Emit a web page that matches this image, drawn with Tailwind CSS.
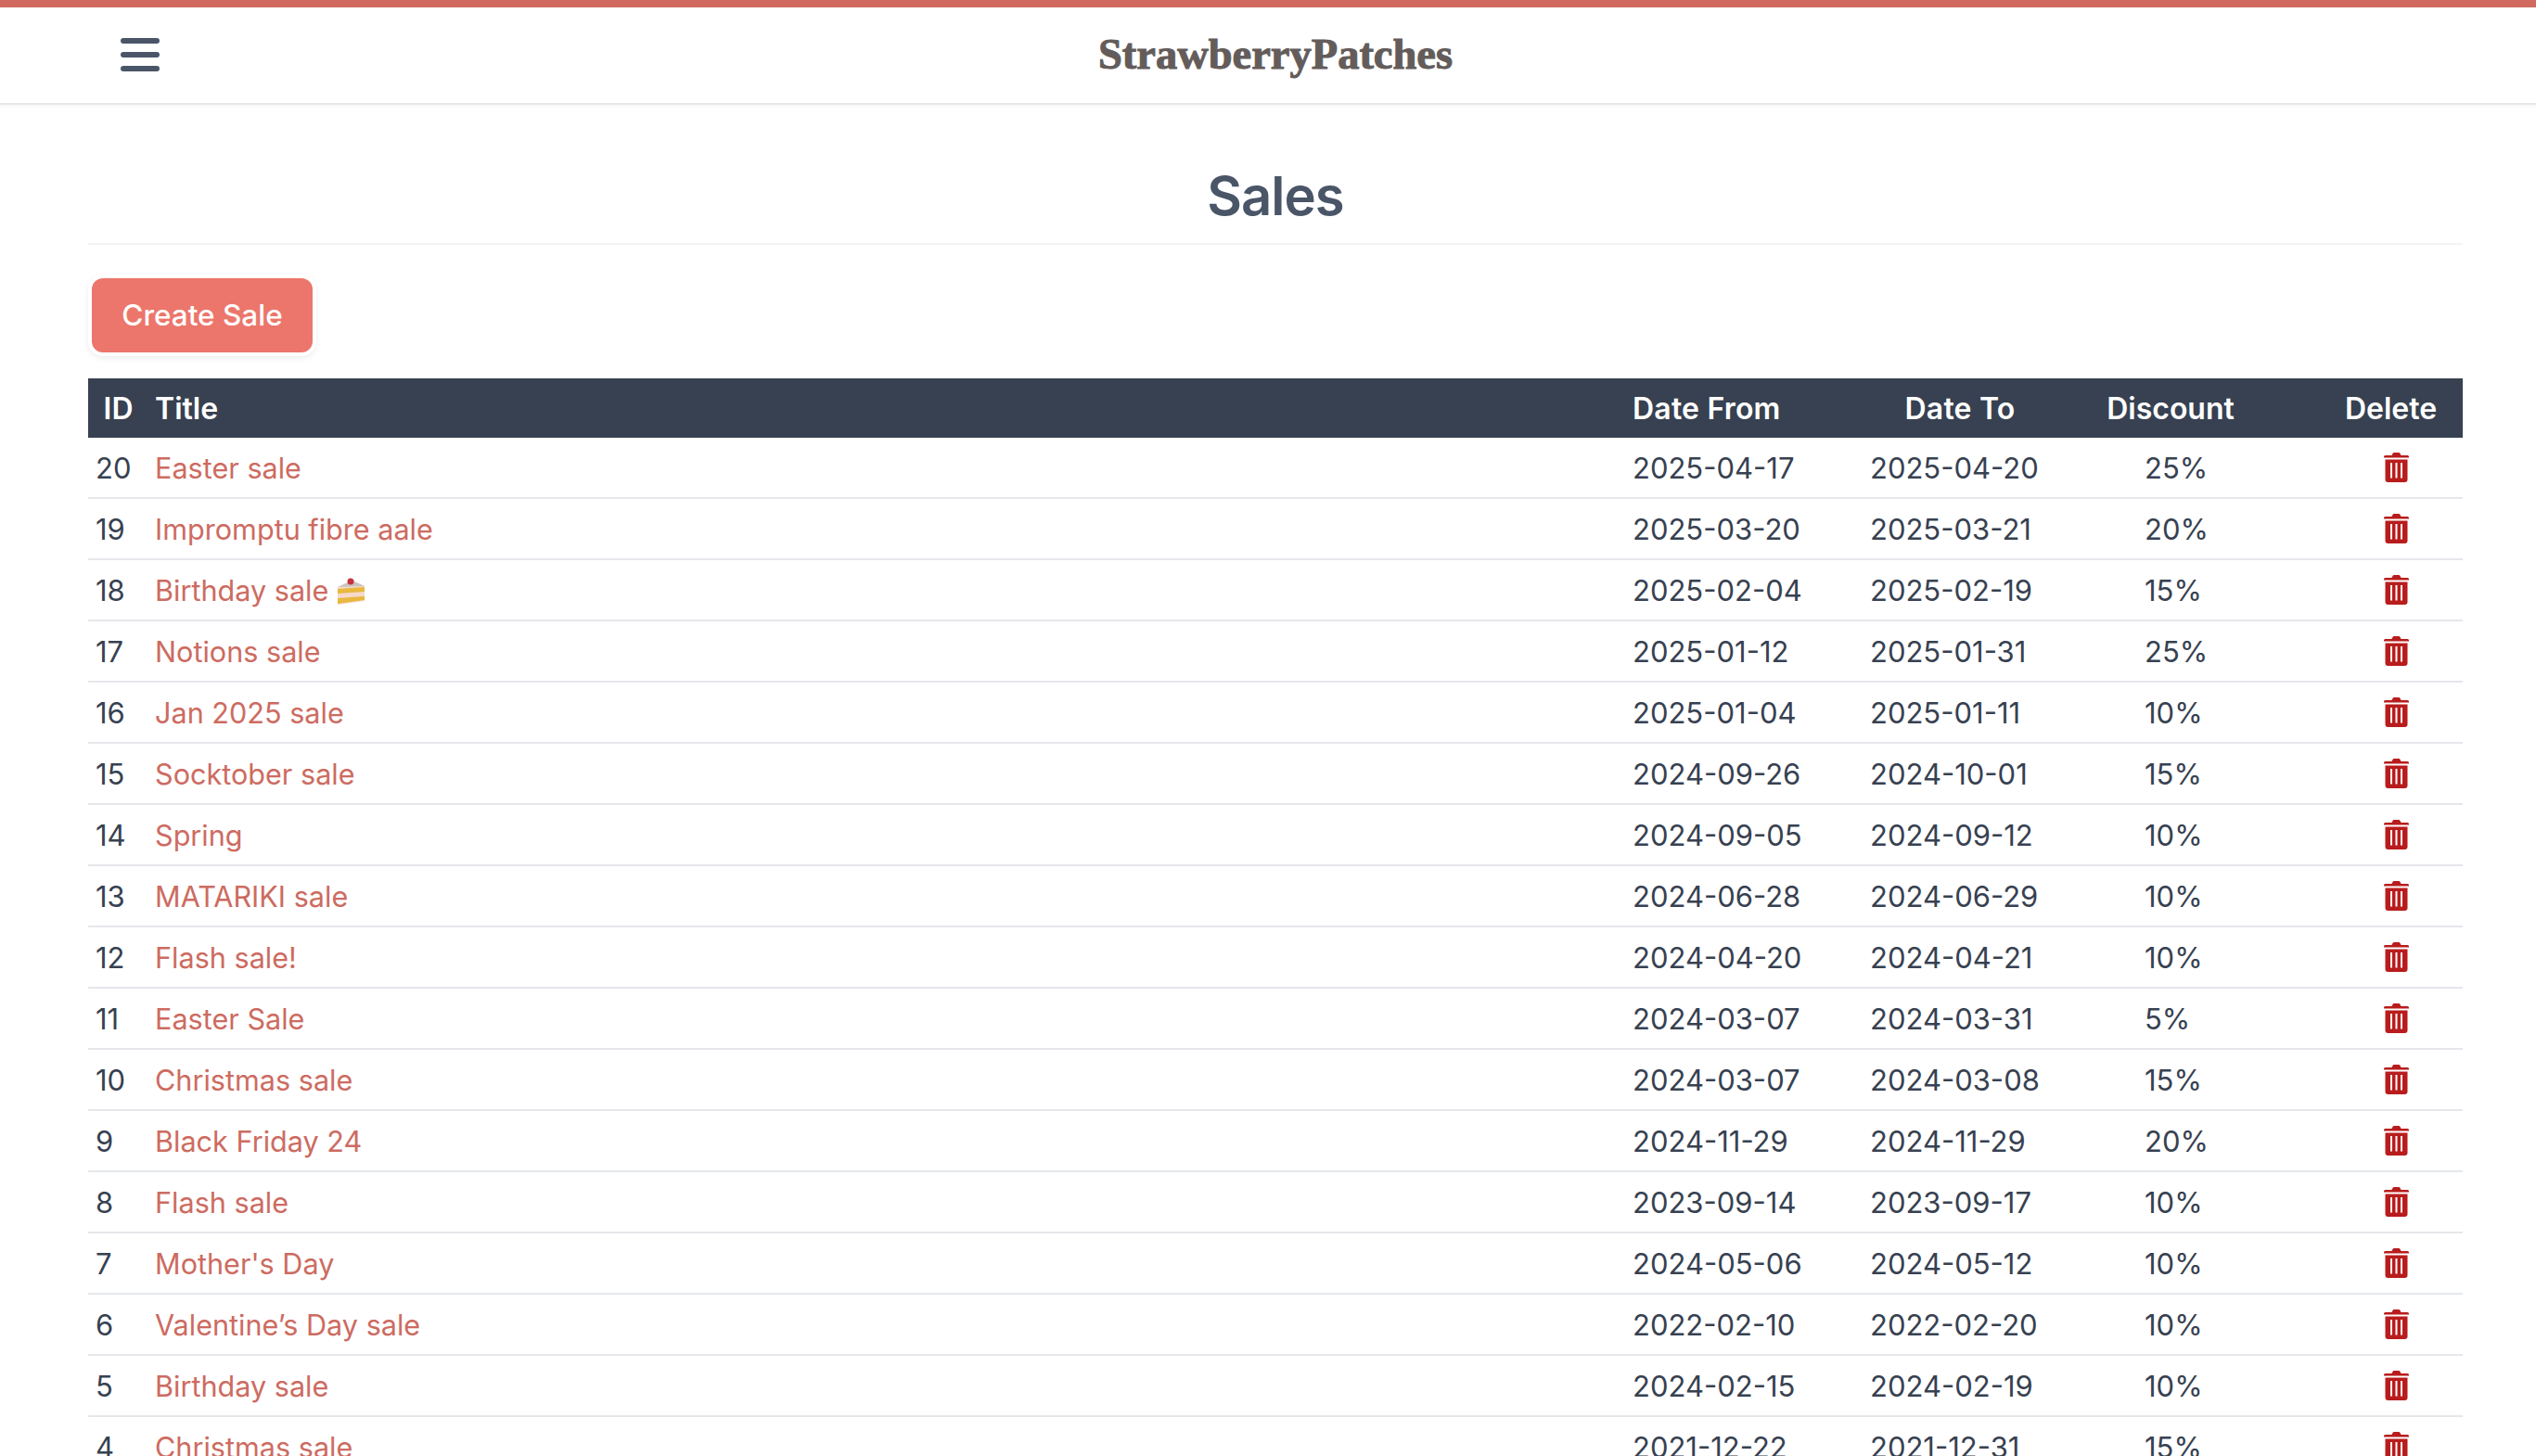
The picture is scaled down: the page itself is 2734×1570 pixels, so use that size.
<!doctype html>
<html lang="en">
<head>
<meta charset="utf-8">
<title>Sales</title>
<script src="https://cdn.jsdelivr.net/npm/@tailwindcss/browser@4"></script>
</head>
<body class="h-[1570px] overflow-hidden bg-white font-['Inter',sans-serif] text-[#374151]">
<svg class="hidden"><symbol id="trash" viewBox="0 0 27 32"><path fill="#b91c1c" fill-rule="evenodd" d="M0 4.500q0-1.500 1.500-1.500H8.500l1-2q.5-1 1.500-1h5q1 0 1.500 1l1 2h7q1.500 0 1.500 1.500v1H0zM1.500 7.500h24V29q0 3-3 3H4.500q-3 0-3-3zM7 11v16.500h2V11zM12.500 11v16.500h2V11zM18 11v16.500h2V11z"/></symbol></svg>
<header class="h-[113px] border-t-8 border-[#d1695f] border-b-2 border-b-[#e8e8e8] shadow-[0_2px_4px_rgba(0,0,0,0.04)] relative flex items-center justify-center pl-[16px]">
  <button class="absolute left-[130px] top-[33px] flex flex-col gap-[9px] w-[42px]">
    <span class="block h-[6px] rounded-full bg-[#4a5568]"></span>
    <span class="block h-[6px] rounded-full bg-[#4a5568]"></span>
    <span class="block h-[6px] rounded-full bg-[#4a5568]"></span>
  </button>
  <div class="font-['Liberation_Serif',serif] font-bold text-[46.5px] leading-none text-[#635c5a] [-webkit-text-stroke:1px_#635c5a]">StrawberryPatches</div>
</header>
<main class="ml-[95px] w-[2560px]">
  <h1 class="h-[151px] pt-[63px] border-b-2 border-[#f3f4f6] text-center text-[58px] leading-[70px] font-semibold tracking-[-1px] text-[#4a5568]">Sales</h1>
  <button class="mt-[36px] ml-[4px] h-[80px] w-[238px] rounded-[12px] bg-[#ec766b] text-white text-[31.5px] font-medium shadow-[0_0_0_4px_#fff,0_2px_6px_4px_rgba(0,0,0,0.08)]">Create Sale</button>
  <table class="mt-[28px] w-full table-fixed border-collapse text-[31px] leading-[62px] [&_td:not(:last-child)]:pt-[2px]">
    <colgroup>
      <col class="w-[65px]"><col class="w-[1592px]"><col class="w-[256px]"><col class="w-[210px]"><col class="w-[244px]"><col>
    </colgroup>
    <thead class="bg-[#374151] text-white text-[32px]">
      <tr class="h-[64px]">
        <th class="font-semibold text-center pt-[2px]">ID</th>
        <th class="font-semibold text-left pl-[7px] pt-[2px]">Title</th>
        <th class="font-semibold text-left pl-[8px] pt-[2px] tracking-[0.2px]">Date From</th>
        <th class="font-semibold text-center pt-[2px] tracking-[0.2px]">Date To</th>
        <th class="font-semibold text-center pt-[2px]">Discount</th>
        <th class="font-semibold text-center pl-[38px] pt-[2px]">Delete</th>
      </tr>
    </thead>
    <tbody>
      <tr class="border-b-2 border-[#e5e7eb]"><td class="pl-2">20</td><td class="pl-[7px] text-[30.6px] text-[#cd6b61]">Easter sale</td><td class="pl-2">2025-04-17</td><td class="pl-2">2025-04-20</td><td class="pl-[94px]">25%</td><td><svg class="ml-[108px] w-[27px] h-[32px]"><use href="#trash"/></svg></td></tr>
      <tr class="border-b-2 border-[#e5e7eb]"><td class="pl-2">19</td><td class="pl-[7px] text-[30.6px] text-[#cd6b61]">Impromptu fibre aale</td><td class="pl-2">2025-03-20</td><td class="pl-2">2025-03-21</td><td class="pl-[94px]">20%</td><td><svg class="ml-[108px] w-[27px] h-[32px]"><use href="#trash"/></svg></td></tr>
      <tr class="border-b-2 border-[#e5e7eb]"><td class="pl-2">18</td><td class="pl-[7px] text-[30.6px] text-[#cd6b61]"><span class="inline-flex h-[62px] align-top items-center gap-[9px]">Birthday sale <svg class="w-[31px] h-[29px]" viewBox="0 0 31 29"><path fill="#f6d9cc" d="M1 10 18 3 30 9v16L1 29z"/><path fill="#e8b83f" d="M1 12 30 10v5L1 17zM1 22l29-2v4L1 28z"/><path fill="#c9c4c0" d="M1 10 16 3l14 6z"/><circle cx="15" cy="4" r="3.500" fill="#c8323c"/></svg></span></td><td class="pl-2">2025-02-04</td><td class="pl-2">2025-02-19</td><td class="pl-[94px]">15%</td><td><svg class="ml-[108px] w-[27px] h-[32px]"><use href="#trash"/></svg></td></tr>
      <tr class="border-b-2 border-[#e5e7eb]"><td class="pl-2">17</td><td class="pl-[7px] text-[30.6px] text-[#cd6b61]">Notions sale</td><td class="pl-2">2025-01-12</td><td class="pl-2">2025-01-31</td><td class="pl-[94px]">25%</td><td><svg class="ml-[108px] w-[27px] h-[32px]"><use href="#trash"/></svg></td></tr>
      <tr class="border-b-2 border-[#e5e7eb]"><td class="pl-2">16</td><td class="pl-[7px] text-[30.6px] text-[#cd6b61]">Jan 2025 sale</td><td class="pl-2">2025-01-04</td><td class="pl-2">2025-01-11</td><td class="pl-[94px]">10%</td><td><svg class="ml-[108px] w-[27px] h-[32px]"><use href="#trash"/></svg></td></tr>
      <tr class="border-b-2 border-[#e5e7eb]"><td class="pl-2">15</td><td class="pl-[7px] text-[30.6px] text-[#cd6b61]">Socktober sale</td><td class="pl-2">2024-09-26</td><td class="pl-2">2024-10-01</td><td class="pl-[94px]">15%</td><td><svg class="ml-[108px] w-[27px] h-[32px]"><use href="#trash"/></svg></td></tr>
      <tr class="border-b-2 border-[#e5e7eb]"><td class="pl-2">14</td><td class="pl-[7px] text-[30.6px] text-[#cd6b61]">Spring</td><td class="pl-2">2024-09-05</td><td class="pl-2">2024-09-12</td><td class="pl-[94px]">10%</td><td><svg class="ml-[108px] w-[27px] h-[32px]"><use href="#trash"/></svg></td></tr>
      <tr class="border-b-2 border-[#e5e7eb]"><td class="pl-2">13</td><td class="pl-[7px] text-[30.6px] text-[#cd6b61]">MATARIKI sale</td><td class="pl-2">2024-06-28</td><td class="pl-2">2024-06-29</td><td class="pl-[94px]">10%</td><td><svg class="ml-[108px] w-[27px] h-[32px]"><use href="#trash"/></svg></td></tr>
      <tr class="border-b-2 border-[#e5e7eb]"><td class="pl-2">12</td><td class="pl-[7px] text-[30.6px] text-[#cd6b61]">Flash sale!</td><td class="pl-2">2024-04-20</td><td class="pl-2">2024-04-21</td><td class="pl-[94px]">10%</td><td><svg class="ml-[108px] w-[27px] h-[32px]"><use href="#trash"/></svg></td></tr>
      <tr class="border-b-2 border-[#e5e7eb]"><td class="pl-2">11</td><td class="pl-[7px] text-[30.6px] text-[#cd6b61]">Easter Sale</td><td class="pl-2">2024-03-07</td><td class="pl-2">2024-03-31</td><td class="pl-[94px]">5%</td><td><svg class="ml-[108px] w-[27px] h-[32px]"><use href="#trash"/></svg></td></tr>
      <tr class="border-b-2 border-[#e5e7eb]"><td class="pl-2">10</td><td class="pl-[7px] text-[30.6px] text-[#cd6b61]">Christmas sale</td><td class="pl-2">2024-03-07</td><td class="pl-2">2024-03-08</td><td class="pl-[94px]">15%</td><td><svg class="ml-[108px] w-[27px] h-[32px]"><use href="#trash"/></svg></td></tr>
      <tr class="border-b-2 border-[#e5e7eb]"><td class="pl-2">9</td><td class="pl-[7px] text-[30.6px] text-[#cd6b61]">Black Friday 24</td><td class="pl-2">2024-11-29</td><td class="pl-2">2024-11-29</td><td class="pl-[94px]">20%</td><td><svg class="ml-[108px] w-[27px] h-[32px]"><use href="#trash"/></svg></td></tr>
      <tr class="border-b-2 border-[#e5e7eb]"><td class="pl-2">8</td><td class="pl-[7px] text-[30.6px] text-[#cd6b61]">Flash sale</td><td class="pl-2">2023-09-14</td><td class="pl-2">2023-09-17</td><td class="pl-[94px]">10%</td><td><svg class="ml-[108px] w-[27px] h-[32px]"><use href="#trash"/></svg></td></tr>
      <tr class="border-b-2 border-[#e5e7eb]"><td class="pl-2">7</td><td class="pl-[7px] text-[30.6px] text-[#cd6b61]">Mother's Day</td><td class="pl-2">2024-05-06</td><td class="pl-2">2024-05-12</td><td class="pl-[94px]">10%</td><td><svg class="ml-[108px] w-[27px] h-[32px]"><use href="#trash"/></svg></td></tr>
      <tr class="border-b-2 border-[#e5e7eb]"><td class="pl-2">6</td><td class="pl-[7px] text-[30.6px] text-[#cd6b61]">Valentine’s Day sale</td><td class="pl-2">2022-02-10</td><td class="pl-2">2022-02-20</td><td class="pl-[94px]">10%</td><td><svg class="ml-[108px] w-[27px] h-[32px]"><use href="#trash"/></svg></td></tr>
      <tr class="border-b-2 border-[#e5e7eb]"><td class="pl-2">5</td><td class="pl-[7px] text-[30.6px] text-[#cd6b61]">Birthday sale</td><td class="pl-2">2024-02-15</td><td class="pl-2">2024-02-19</td><td class="pl-[94px]">10%</td><td><svg class="ml-[108px] w-[27px] h-[32px]"><use href="#trash"/></svg></td></tr>
      <tr class="border-b-2 border-[#e5e7eb]"><td class="pl-2">4</td><td class="pl-[7px] text-[30.6px] text-[#cd6b61]">Christmas sale</td><td class="pl-2">2021-12-22</td><td class="pl-2">2021-12-31</td><td class="pl-[94px]">15%</td><td><svg class="ml-[108px] w-[27px] h-[32px]"><use href="#trash"/></svg></td></tr>
    </tbody>
  </table>
</main>
</body>
</html>
